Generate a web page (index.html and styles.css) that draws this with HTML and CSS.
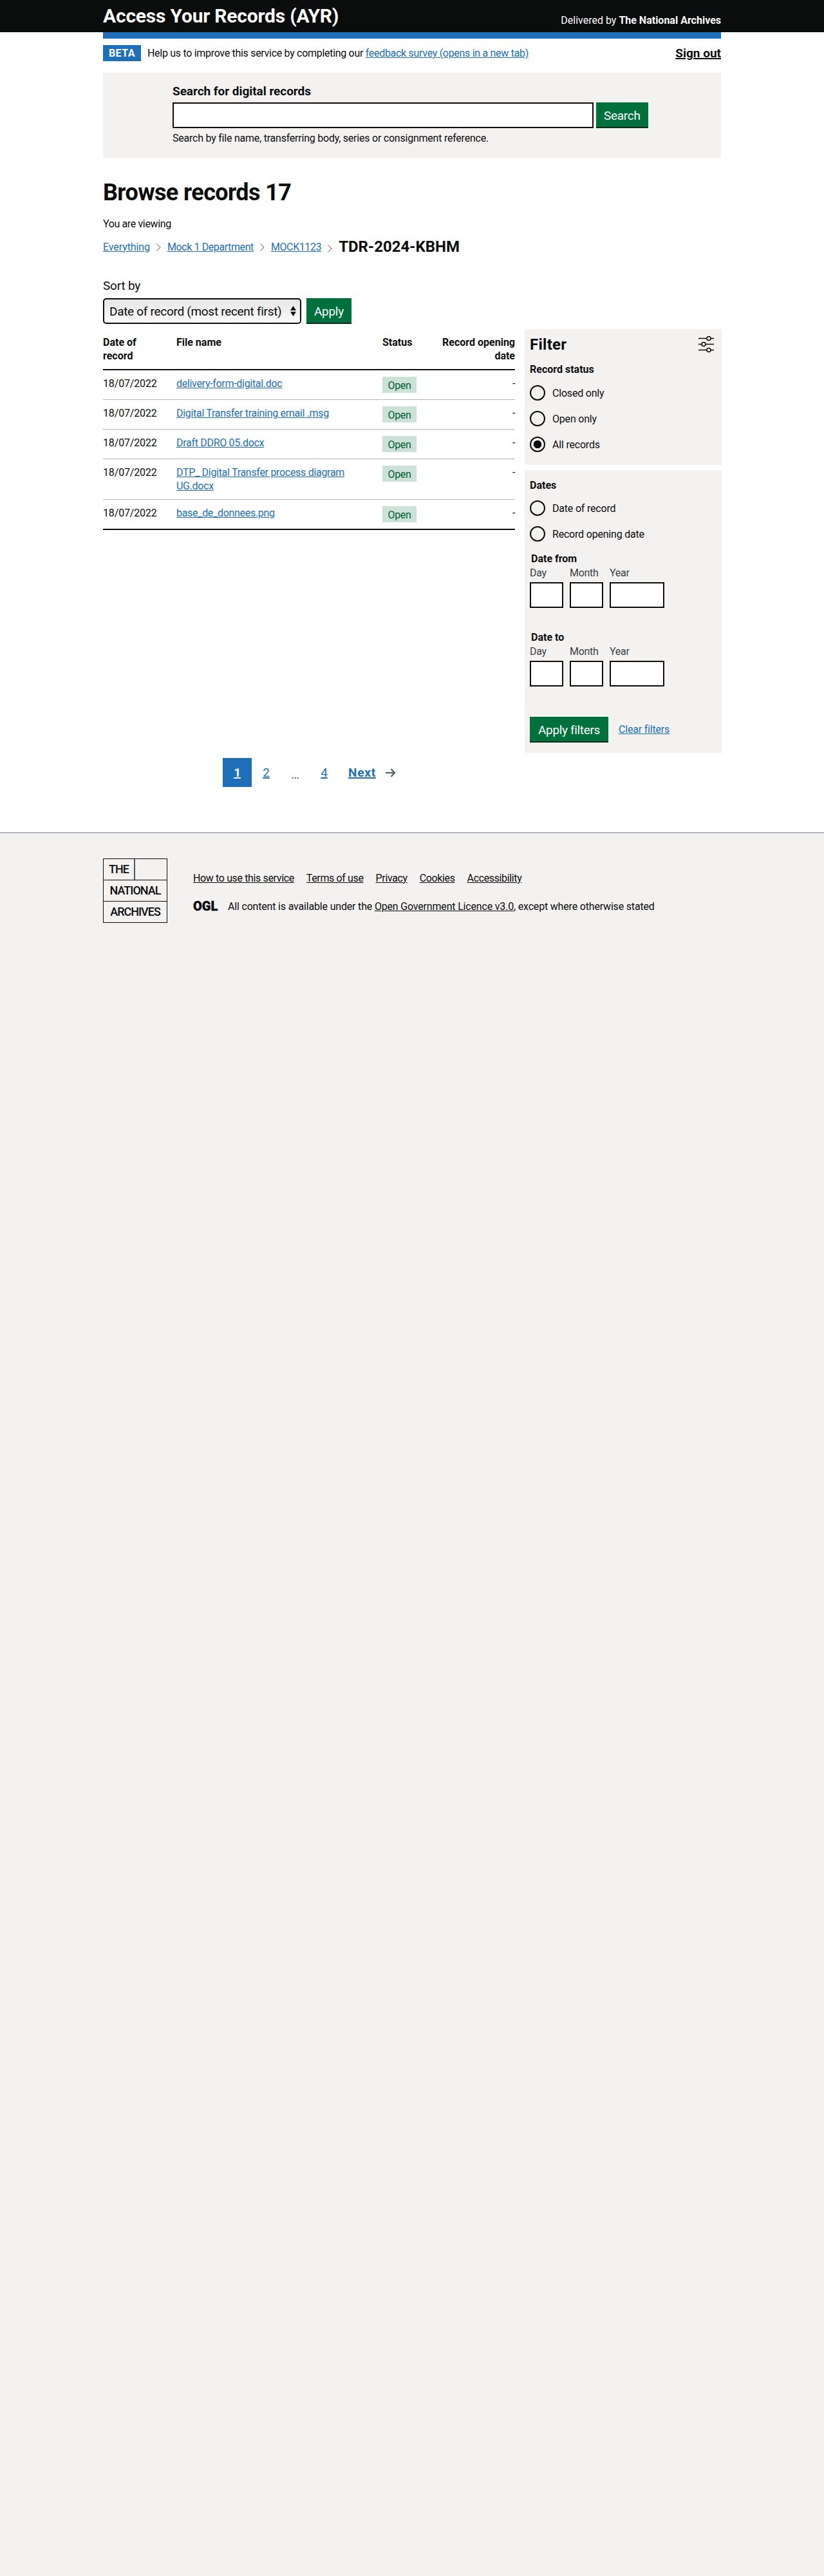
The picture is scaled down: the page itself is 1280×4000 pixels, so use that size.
FILE: index.html
```html
<!DOCTYPE html>
<html lang="en">
<head>
<meta charset="utf-8">
<title>Access Your Records</title>
<link rel="stylesheet" href="styles.css">
</head>
<body>
<header class="masthead">
  <div class="wrap masthead-row">
    <a class="service-name" href="#">Access Your Records (AYR)</a>
    <span class="delivered">Delivered by <strong>The National Archives</strong></span>
  </div>
</header>
<main class="page-body">
<div class="wrap">
  <div class="blue-bar"></div>
  <div class="phase-row">
    <strong class="phase-tag">BETA</strong>
    <span class="phase-text">Help us to improve this service by completing our <a href="#" class="link">feedback survey (opens in a new tab)</a></span>
    <a href="#" class="sign-out">Sign out</a>
  </div>
  <section class="search-panel">
    <div class="search-inner">
      <label class="search-label" for="q">Search for digital records</label>
      <div class="search-row">
        <input id="q" class="search-input" type="text">
        <button class="btn">Search</button>
      </div>
      <p class="search-hint">Search by file name, transferring body, series or consignment reference.</p>
    </div>
  </section>
  <h1 class="page-title">Browse records 17</h1>
  <p class="viewing">You are viewing</p>
  <nav class="crumbs">
    <a href="#" class="link crumb-first">Everything</a>
    <svg class="chev" viewBox="0 0 7 12" width="7" height="12"><path d="M.5.5L6 6 .5 11.500" fill="none" stroke="#505a5f" stroke-width="1"/></svg>
    <a href="#" class="link">Mock 1 Department</a>
    <svg class="chev" viewBox="0 0 7 12" width="7" height="12"><path d="M.5.5L6 6 .5 11.500" fill="none" stroke="#505a5f" stroke-width="1"/></svg>
    <a href="#" class="link">MOCK1123</a>
    <svg class="chev last" viewBox="0 0 7 12" width="7" height="12"><path d="M.5.5L6 6 .5 11.500" fill="none" stroke="#505a5f" stroke-width="1"/></svg>
    <strong class="crumb-current">TDR-2024-KBHM</strong>
  </nav>
  <div class="sort">
    <label class="sort-label" for="s">Sort by</label>
    <div class="sort-row">
      <div class="select-wrap">
        <select id="s" class="select"><option>Date of record (most recent first)</option></select>
        <svg class="select-arrows" viewBox="0 0 9 16" width="9" height="16"><path d="M4.500 0L9 7H0zM4.500 16L0 9h9z" fill="#0b0c0c"/></svg>
      </div>
      <button class="btn">Apply</button>
    </div>
  </div>
  <div class="browse">
    <div class="results">
      <table class="table">
        <colgroup><col class="c1"><col class="c2"><col class="c3"><col class="c4"></colgroup>
        <thead>
          <tr><th>Date of record</th><th>File name</th><th>Status</th><th class="right">Record opening date</th></tr>
        </thead>
        <tbody>
          <tr><td class="date">18/07/2022</td><td><a href="#" class="link">delivery-form-digital.doc</a></td><td><span class="tag">Open</span></td><td class="right">-</td></tr>
          <tr><td class="date">18/07/2022</td><td><a href="#" class="link">Digital Transfer training email .msg</a></td><td><span class="tag">Open</span></td><td class="right">-</td></tr>
          <tr><td class="date">18/07/2022</td><td><a href="#" class="link">Draft DDRO 05.docx</a></td><td><span class="tag">Open</span></td><td class="right">-</td></tr>
          <tr><td class="date">18/07/2022</td><td><a href="#" class="link">DTP_ Digital Transfer process diagram<br>UG.docx</a></td><td><span class="tag">Open</span></td><td class="right">-</td></tr>
          <tr><td class="date">18/07/2022</td><td><a href="#" class="link">base_de_donnees.png</a></td><td><span class="tag">Open</span></td><td class="right">-</td></tr>
        </tbody>
      </table>
    </div>
    <aside class="filters">
      <div class="filter-box filter-status">
        <div class="filter-head">
          <h2 class="filter-title">Filter</h2>
          <svg class="filter-icon" viewBox="0 0 24 26" width="24" height="26"><g fill="none" stroke="#0b0c0c" stroke-width="1.6"><path d="M0 3.5h13M19 3.5h5M0 12.500h5M11 12.500h13M0 21.500h13M19 21.500h5"/><circle cx="16" cy="3.500" r="3"/><circle cx="8" cy="12.500" r="3"/><circle cx="16" cy="21.500" r="3"/></g></svg>
        </div>
        <h3 class="filter-sub">Record status</h3>
        <label class="radio"><input type="radio" name="st"><span>Closed only</span></label>
        <label class="radio"><input type="radio" name="st"><span>Open only</span></label>
        <label class="radio"><input type="radio" name="st" checked><span>All records</span></label>
      </div>
      <div class="filter-box filter-dates">
        <h3 class="filter-sub dates-sub">Dates</h3>
        <label class="radio"><input type="radio" name="dt"><span>Date of record</span></label>
        <label class="radio"><input type="radio" name="dt"><span>Record opening date</span></label>
        <div class="date-group">
          <div class="date-legend">Date from</div>
          <div class="date-row">
            <label class="date-field"><span>Day</span><input class="date-input" type="text"></label>
            <label class="date-field"><span>Month</span><input class="date-input" type="text"></label>
            <label class="date-field"><span>Year</span><input class="date-input year" type="text"></label>
          </div>
        </div>
        <div class="date-group">
          <div class="date-legend">Date to</div>
          <div class="date-row">
            <label class="date-field"><span>Day</span><input class="date-input" type="text"></label>
            <label class="date-field"><span>Month</span><input class="date-input" type="text"></label>
            <label class="date-field"><span>Year</span><input class="date-input year" type="text"></label>
          </div>
        </div>
        <div class="filter-actions">
          <button class="btn">Apply filters</button>
          <a href="#" class="link clear">Clear filters</a>
        </div>
      </div>
    </aside>
  </div>
  <nav class="pager">
    <a href="#" class="page current">1</a>
    <a href="#" class="page">2</a>
    <span class="page dots">…</span>
    <a href="#" class="page">4</a>
    <a href="#" class="page next">Next</a>
    <svg class="next-arrow" viewBox="0 0 15 14" width="15" height="14"><path d="M8.500 1L14 7l-5.500 6M0 7h13.500" fill="none" stroke="#505a5f" stroke-width="2"/></svg>
  </nav>
</div>
</main>
<footer class="footer">
  <div class="wrap footer-row">
    <div class="tna-logo">
      <div class="logo-row logo-top"><span class="logo-the">THE</span><span class="logo-gap"></span></div>
      <div class="logo-row">NATIONAL</div>
      <div class="logo-row">ARCHIVES</div>
    </div>
    <div class="footer-main">
      <ul class="footer-links">
        <li><a href="#">How to use this service</a></li>
        <li><a href="#">Terms of use</a></li>
        <li><a href="#">Privacy</a></li>
        <li><a href="#">Cookies</a></li>
        <li><a href="#">Accessibility</a></li>
      </ul>
      <div class="licence">
        <span class="ogl">OGL</span>
        <span class="lic-text">All content is available under the <a href="#">Open Government Licence v3.0</a>, except where otherwise stated</span>
      </div>
    </div>
  </div>
</footer>
</body>
</html>
```
FILE: styles.css
```css
* { box-sizing: border-box; }
html, body { margin: 0; padding: 0; }
body {
  font-family: Roboto, "Noto Sans", sans-serif;
  font-size: 16px;
  line-height: 21px;
  letter-spacing: -0.3px;
  color: #0b0c0c;
  background: #f3f2f1;
}
a { color: inherit; }
.wrap { width: 960px; margin: 0 auto; }
.page-body { background: #fff; padding-bottom: 70px; }

.masthead { background: #0b0c0c; height: 50px; color: #fff; }
.masthead-row { display: flex; justify-content: space-between; align-items: flex-start; padding-top: 5px; }
.service-name { font-size: 30px; line-height: 40px; font-weight: 700; letter-spacing: -0.2px; color: #fff; text-decoration: none; }
.delivered { font-size: 16px; letter-spacing: 0; margin-top: 16px; }
.delivered strong { font-weight: 700; }
.blue-bar { height: 10px; background: #1d70b8; }

.phase-row { display: flex; align-items: center; margin-top: 10px; height: 25px; }
.phase-tag { background: #1d70b8; color: #fff; height: 25px; width: 59px; display: flex; align-items: center; justify-content: center; font-size: 16px; letter-spacing: .5px; }
.phase-text { margin-left: 10px; flex: 1; }
.link { color: #1d70b8; text-decoration: underline; }
.sign-out { font-size: 19px; font-weight: 700; letter-spacing: 0; color: #0b0c0c; text-decoration-thickness: 2px; }

.search-panel { background: #f3f2f1; margin-top: 18px; height: 132px; padding: 16px 0 0 108px; }
.search-label { display: block; font-size: 19px; line-height: 25px; font-weight: 700; letter-spacing: -0.05px; }
.search-row { display: flex; gap: 4px; margin-top: 5px; }
.search-input { width: 654px; height: 40px; border: 2px solid #0b0c0c; background: #fff; }
.btn { font: inherit; font-size: 19px; line-height: 25px; height: 40px; padding: 0 12px; border: 0; letter-spacing: -0.3px; color: #fff; background: #00703c; box-shadow: inset 0 -2px 0 #002d18; }
.search-hint { margin: 5px 0 0; letter-spacing: -0.23px; }

.page-title { font-size: 36px; line-height: 45px; font-weight: 700; letter-spacing: -0.6px; margin: 32px 0 0; }
.viewing { margin: 15px 0 0; letter-spacing: -0.37px; }
.crumbs { display: flex; align-items: center; gap: 10px; margin-top: 10px; height: 30px; letter-spacing: -0.4px; }
.crumb-first { letter-spacing: -0.1px; }
.chev { flex: none; margin-top: 2px; }
.chev.last { margin-top: 6px; }
.crumb-current { font-size: 24px; letter-spacing: -0.05px; }

.sort { margin-top: 33px; }
.sort-label { display: block; font-size: 19px; line-height: 25px; letter-spacing: -0.2px; }
.sort-row { display: flex; gap: 8px; margin-top: 7px; }
.select-wrap { position: relative; width: 308px; height: 40px; }
.select { appearance: none; width: 100%; height: 40px; border: 2px solid #0b0c0c; border-radius: 5px; background: linear-gradient(#e6e6e6, #fafafa); font: inherit; font-size: 19px; letter-spacing: -0.3px; padding: 0 20px 0 8px; color: #0b0c0c; }
.select-arrows { position: absolute; right: 8px; top: 12px; }

.browse { display: flex; gap: 15px; margin-top: 8px; }
.results { width: 640px; flex: none; }
.table { width: 640px; table-layout: fixed; border-collapse: collapse; }
.c1 { width: 114px; }
.c2 { width: 320px; }
.c3 { width: 80px; }
.c4 { width: 126px; }
.table th { text-align: left; font-weight: 700; letter-spacing: 0; padding: 10px 20px 10px 0; vertical-align: top; border-bottom: 2px solid #0b0c0c; }
.table th.right, .table td.right { text-align: right; padding-right: 0; }
.table td { padding: 10px 20px 10px 0; vertical-align: top; border-bottom: 1px solid #b1b4b6; }
.table td.date { letter-spacing: -0.15px; }
.table tbody tr:last-child td { border-bottom: 2px solid #0b0c0c; }
.tag { display: block; width: 53px; height: 25px; line-height: 27px; text-align: center; background: #cce2d8; color: #005a30; }

.filters { flex: none; width: 306px; display: flex; flex-direction: column; gap: 8px; }
.filter-box { background: #f3f2f1; padding: 0 8px; }
.filter-status { height: 211px; }
.filter-dates { height: 439px; }
.filter-head { display: flex; justify-content: space-between; align-items: center; height: 47px; padding-right: 4px; }
.filter-title { font-size: 24px; line-height: 30px; margin: 0; font-weight: 700; letter-spacing: .25px; }
.filter-sub { font-size: 16px; line-height: 21px; font-weight: 700; letter-spacing: 0; margin: 5px 0 0; }
.dates-sub { margin: 13px 0 0; }
.radio { display: flex; align-items: center; gap: 11px; height: 24px; margin-top: 16px; letter-spacing: -0.2px; }
.filter-sub + .radio { margin-top: 14px; }
.dates-sub + .radio { margin-top: 13px; }
.radio input { appearance: none; margin: 0; width: 24px; height: 24px; border: 2px solid #0b0c0c; border-radius: 50%; background: transparent; }
.radio input:checked { background: radial-gradient(circle, #0b0c0c 0 6px, transparent 6.5px); }
.date-group { height: 122px; }
.filter-dates .radio + .date-group { margin-top: 16px; }
.date-legend { font-weight: 700; letter-spacing: 0; padding-left: 2px; line-height: 22px; }
.date-row { display: flex; gap: 10px; }
.date-field { display: flex; flex-direction: column; gap: 4px; color: #383f43; }
.date-input { width: 52px; height: 40px; border: 2px solid #0b0c0c; background: #fff; }
.date-input.year { width: 85px; }
.filter-actions { display: flex; align-items: center; gap: 16px; margin-top: 12px; }
.filter-actions .btn { width: 122px; padding: 0; letter-spacing: -0.35px; }
.clear { letter-spacing: -0.2px; margin-top: -2px; }

.pager { display: flex; align-items: center; justify-content: center; width: 640px; margin-top: 8px; height: 45px; }
.page { display: flex; align-items: center; justify-content: center; font-size: 19px; height: 45px; width: 45px; color: #1d70b8; text-decoration: underline; text-decoration-thickness: 2px; font-weight: 400; }
.page.current { background: #1d70b8; color: #fff; font-weight: 700; }
.page.dots { text-decoration: none; color: #505a5f; padding-top: 6px; }
.page.next { width: auto; font-weight: 700; letter-spacing: .8px; margin-left: 15px; margin-right: 15px; }

.footer { border-top: 2px solid #b1b4b6; padding-top: 39px; }
.footer-row { display: flex; gap: 40px; }
.tna-logo { width: 100px; height: 100px; border: 1.500px solid #0b0c0c; font-weight: 500; }
.logo-row { height: 33px; line-height: 32px; text-align: center; font-size: 18px; letter-spacing: -1px; border-bottom: 1px solid #0b0c0c; }
.logo-row:last-child { border-bottom: 0; }
.logo-top { display: flex; padding: 0; }
.logo-the { width: 49px; border-right: 2px solid #505a5f; }
.footer-main { flex: 1; padding-top: 20px; }
.footer-links { list-style: none; margin: 0; padding: 0; display: flex; gap: 19px; letter-spacing: -0.365px; }
.licence { display: flex; align-items: center; gap: 13px; margin-top: 22px; letter-spacing: -0.18px; }
.ogl { font-weight: 900; font-size: 20px; letter-spacing: 0; width: 41px; line-height: 22px; -webkit-text-stroke: .4px #0b0c0c; }
```
